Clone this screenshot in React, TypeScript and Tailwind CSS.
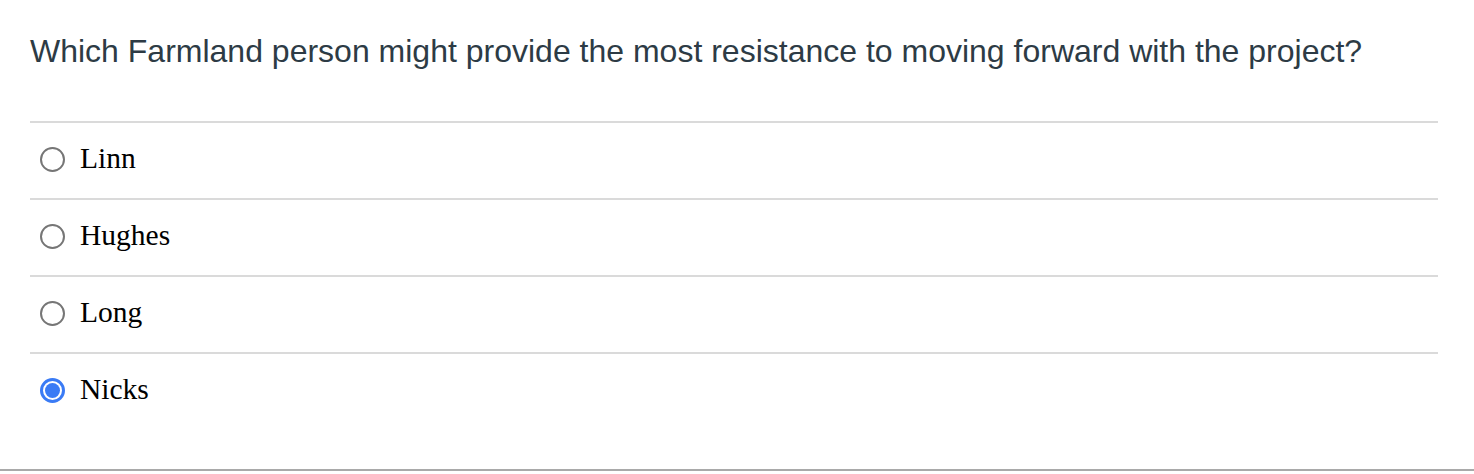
const options = [
  { label: "Linn", checked: false },
  { label: "Hughes", checked: false },
  { label: "Long", checked: false },
  { label: "Nicks", checked: true },
];

function Radio({ checked }: { checked: boolean }) {
  if (checked) {
    return (
      <span className="w-[25px] h-[25px] rounded-full border-[3px] border-[#3a7bf5] flex items-center justify-center shrink-0">
        <span className="w-[15px] h-[15px] rounded-full bg-[#3a7bf5]" />
      </span>
    );
  }
  return <span className="w-[25px] h-[25px] rounded-full border-2 border-[#767676] bg-white shrink-0" />;
}

export default function App() {
  return (
    <div className="w-[1474px] h-[471px] bg-white border-b-2 border-[#a9a9a9]">
      <div className="pl-[30px] pr-[36px]">
        <h1 className="pt-[31px] mb-[50px] text-[32px] leading-[40px] text-[#2d3b45] font-['Liberation_Sans',Arial,sans-serif] whitespace-nowrap">
          Which Farmland person might provide the most resistance to moving forward with the project?
        </h1>
        <ul>
          {options.map((o) => (
            <li
              key={o.label}
              className="h-[77px] border-t-2 border-[#dadada] flex items-center gap-[15px] pl-[10px] pb-[2px]"
            >
              <Radio checked={o.checked} />
              <span className="text-[29.5px] leading-none text-black font-['Liberation_Serif','Times_New_Roman',serif] pb-[2px]">
                {o.label}
              </span>
            </li>
          ))}
        </ul>
      </div>
    </div>
  );
}
